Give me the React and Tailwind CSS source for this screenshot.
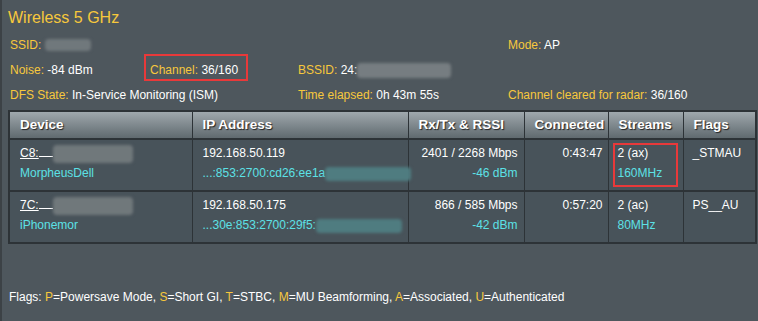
import React from "react";

const Y = "text-[#f7c83c]";
const CY = "text-[#5ce1e6]";

const Blur = ({ w, h = 14, color = "bg-[#6f777b]", className = "" }) => (
  <span
    className={`inline-block align-middle rounded-sm blur-[1.5px] ${color} ${className}`}
    style={{ width: w, height: h }}
  />
);

const Info = ({ label, children }) => (
  <div className="whitespace-nowrap">
    <span className={Y}>{label}: </span>
    <span className="text-white">{children}</span>
  </div>
);

const rows = [
  {
    mac: "C8:",
    name: "MorpheusDell",
    ip: "192.168.50.119",
    ip6: "...:853:2700:cd26:ee1a",
    rate: "2401 / 2268 Mbps",
    rssi: "-46 dBm",
    time: "0:43:47",
    stream: "2 (ax)",
    bw: "160MHz",
    flags: "_STMAU",
    boxed: true,
  },
  {
    mac: "7C:",
    name: "iPhonemor",
    ip: "192.168.50.175",
    ip6: "...30e:853:2700:29f5:",
    rate: "866 / 585 Mbps",
    rssi: "-42 dBm",
    time: "0:57:20",
    stream: "2 (ac)",
    bw: "80MHz",
    flags: "PS__AU",
  },
];

const headers = ["Device", "IP Address", "Rx/Tx & RSSI", "Connected", "Streams", "Flags"];

export default function App() {
  return (
    <div
      className="h-[321px] w-[758px] overflow-hidden border-l-2 border-[#3c4246] bg-[#4e575d] pl-[6px] text-[12px] leading-[20px] text-white"
      style={{ fontFamily: '"Liberation Sans", Arial, sans-serif' }}
    >
      {/* title */}
      <div className={`pt-[8px] text-[16px] leading-[20px] ${Y}`}>Wireless 5 GHz</div>

      {/* info grid */}
      <div className="mt-[4px] grid grid-cols-[140px_148px_210px_1fr] auto-rows-[25px] items-center pl-[2px]">
        <Info label="SSID">
          <Blur w={46} h={12} color="bg-[#70787c]" />
        </Info>
        <div />
        <div />
        <Info label="Mode">AP</Info>

        <Info label="Noise">-84 dBm</Info>
        <div className="relative">
          <Info label="Channel">36/160</Info>
          <div className="absolute -left-[6px] -top-[6px] h-[27px] w-[104px] border-2 border-[#e8393a]" />
        </div>
        <Info label="BSSID">
          24:
          <Blur w={94} h={15} color="bg-[#767d81]" />
        </Info>
        <div />

        <div className="col-span-2">
          <Info label="DFS State">In-Service Monitoring (ISM)</Info>
        </div>
        <Info label="Time elapsed">0h 43m 55s</Info>
        <Info label="Channel cleared for radar">36/160</Info>
      </div>

      {/* client table */}
      <table className="mt-[3px] w-[747px] table-fixed border-collapse border-2 border-[#2d3337]">
        <colgroup>
          <col className="w-[183px]" />
          <col className="w-[216px]" />
          <col className="w-[116px]" />
          <col className="w-[84px]" />
          <col className="w-[75px]" />
          <col className="w-[73px]" />
        </colgroup>
        <thead>
          <tr className="h-[28px] bg-gradient-to-b from-[#a2abb0] to-[#5e686d]">
            {headers.map((h) => (
              <th
                key={h}
                className="border border-[#2d3337] px-[10px] text-left text-[13.5px] font-bold text-white [text-shadow:1px_1px_1px_#222]"
              >
                {h}
              </th>
            ))}
          </tr>
        </thead>
        <tbody>
          {rows.map((r) => (
            <tr key={r.mac} className="h-[52px] bg-[#48535a] align-top">
              <td className="border-x border-y-2 border-[#2d3337] px-[10px] pt-[3px]">
                <div className="whitespace-nowrap">
                  <span className="underline">{r.mac}</span>
                  <span className="inline-block w-[14px] border-b border-white align-baseline" />
                  <Blur w={80} h={18} color="bg-[#70787b]" />
                </div>
                <div className={CY}>{r.name}</div>
              </td>
              <td className="border-x border-y-2 border-[#2d3337] px-[10px] pt-[3px]">
                <div>{r.ip}</div>
                <div className={`whitespace-nowrap ${CY}`}>
                  {r.ip6}
                  <Blur w={86} h={14} color="bg-[#4f7c80]" />
                </div>
              </td>
              <td className="border-x border-y-2 border-[#2d3337] pr-[6px] pt-[3px] text-right">
                <div className="whitespace-nowrap">{r.rate}</div>
                <div className={CY}>{r.rssi}</div>
              </td>
              <td className="border-x border-y-2 border-[#2d3337] pr-[5px] pt-[3px] text-right">
                {r.time}
              </td>
              <td className="relative border-x border-y-2 border-[#2d3337] px-[9px] pt-[3px]">
                <div>{r.stream}</div>
                <div className={CY}>{r.bw}</div>
                {r.boxed && (
                  <div className="absolute left-[4px] top-[3px] h-[44px] w-[65px] border-2 border-[#e8393a]" />
                )}
              </td>
              <td className="border-x border-y-2 border-[#2d3337] px-[9px] pt-[3px]">{r.flags}</td>
            </tr>
          ))}
        </tbody>
      </table>

      {/* legend */}
      <div className="mt-[45px] pl-[1px] leading-[16px]">
        Flags: <span className={Y}>P</span>=Powersave Mode, <span className={Y}>S</span>=Short GI,{" "}
        <span className={Y}>T</span>=STBC, <span className={Y}>M</span>=MU Beamforming,{" "}
        <span className={Y}>A</span>=Associated, <span className={Y}>U</span>=Authenticated
      </div>
    </div>
  );
}
